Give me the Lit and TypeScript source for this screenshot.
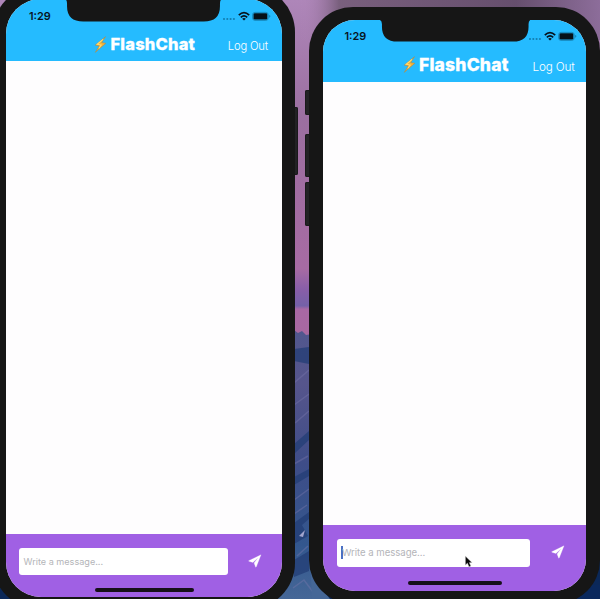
import { LitElement, html, css } from "lit";
import { customElement, property } from "lit/decorators.js";

@customElement("phone-frame")
class PhoneFrame extends LitElement {
  @property({ type: Boolean }) focused = false;

  static styles = css`
    :host { display: block; position: relative; box-sizing: border-box; background: #161616; font-family: Inter, "Liberation Sans", sans-serif; }
    .screen { height: 100%; overflow: hidden; display: flex; flex-direction: column; background: #fefdfe; position: relative; border-radius: var(--radius); }
    header { flex: none; height: var(--head); background: #25bbff; display: flex; flex-direction: column; }
    .status { position: relative; box-sizing: border-box; flex: none; height: var(--status); display: flex; align-items: flex-end; justify-content: space-between; padding: 0 var(--stat-right) 0 var(--stat-left); font-weight: 600; font-size: 10.9px; line-height: 13px; color: #07131d; }
    .icons { display: block; width: 49px; height: 11px; margin-bottom: 1.5px; }
    .notch { position: absolute; top: 0; left: var(--notch-left); width: var(--notch-w); height: var(--notch-h); fill: #161616; }
    .nav { flex: 1; display: grid; grid-template-columns: 1fr auto; padding: 0 var(--nav-right) 0 var(--nav-left); padding-top: var(--nav-top); color: #fff; white-space: nowrap; align-items: start; }
    .title { display: flex; align-items: center; font-size: var(--title); line-height: 20px; font-weight: 800; letter-spacing: var(--title-track); -webkit-text-stroke: .3px #fff; }
    .bolt { width: 13px; height: 17px; margin-right: 3.5px; }
    .logout { font-size: var(--logout); line-height: 20px; font-weight: 300; padding-top: 2px; letter-spacing: -.15px; }
    .messages { flex: 1; }
    footer { flex: none; box-sizing: border-box; height: var(--foot); background: #a060e4; display: flex; align-items: flex-start; padding: var(--foot-top) 0 0 var(--foot-left); position: relative; }
    .field { box-sizing: border-box; width: var(--field-w); height: var(--field-h); border-radius: 3px; background: #fff; display: flex; align-items: center; padding-left: 5px; font-size: var(--message); color: #b4b5b9; white-space: nowrap; letter-spacing: var(--message-track); }
    .caret { width: 2px; height: 13px; background: #4b70c4; margin-left: -1px; margin-right: -.5px; }
    .send { width: 14px; height: 14px; margin-left: var(--send-gap); margin-top: 6.5px; fill: #fff; }
    .home { position: absolute; left: var(--home-left); width: var(--home-w); bottom: var(--home-bottom); height: 3.5px; border-radius: 2px; background: #161019; }
  `;

  render() {
    return html`
      <div class="screen">
        <header>
          <div class="status">
            <svg class="notch" viewBox="0 0 154 25" preserveAspectRatio="none"><path d="M0 0Q2 1 2 5V8Q2 25 18 25H136Q152 25 152 8V5Q152 1 154 0Z"/></svg>
            <span>1:29</span>
            <svg class="icons" viewBox="0 0 49 11">
              <g fill="#1482b6"><rect x="1" y="7" width="2" height="2" rx=".7"/><rect x="4.3" y="7" width="2" height="2" rx=".7"/><rect x="7.6" y="7" width="2" height="2" rx=".7"/><rect x="10.9" y="7" width="2" height="2" rx=".7"/></g>
              <g fill="none" stroke="#07131d" stroke-width="1.7"><path d="M16.8 4.2Q22 -.8 27.2 4.2"/><path d="M18.8 6.4Q22 3.5 25.2 6.4"/></g>
              <path d="M20.2 7.7Q22 6.4 23.8 7.7L22 9.6Z" fill="#07131d"/>
              <rect x="30.6" y="1.4" width="15.6" height="8" rx="2.4" fill="none" stroke="#147eae" stroke-width=".8"/>
              <rect x="31.5" y="2.2" width="13.8" height="6.4" rx="1.3" fill="#051019"/>
              <path d="M47.2 4V6.7Q48.4 6 48.4 5.3T47.2 4Z" fill="#147eae"/>
            </svg>
          </div>
          <div class="nav">
            <div class="title">
              <svg class="bolt" viewBox="0 0 12 15"><path d="M10.6 .3L1.2 8.1L5 8.8L1.2 14.7L10.9 6.4L7.1 5.7Z" fill="#f7b336" stroke="#a98c52" stroke-width=".6"/><path d="M8.4 2.8L2.9 7.3L6.6 8L4.5 11" fill="none" stroke="#ffdc73" stroke-width="1"/></svg>
              <span>FlashChat</span>
            </div>
            <span class="logout">Log Out</span>
          </div>
        </header>
        <div class="messages"></div>
        <footer>
          <div class="field">${this.focused ? html`<span class="caret"></span>` : ""}<span>Write a message...</span></div>
          <svg class="send" viewBox="0 0 14 14"><path d="M13 .8L.8 6.7Q.4 7.1 1 7.3L4.9 8.4L10.3 3.5L6.1 9.1L7.6 13Q8 13.5 8.3 12.8Z" stroke="#fff" stroke-width=".3"/></svg>
          <div class="home"></div>
        </footer>
      </div>`;
  }
}

@customElement("app-root")
class AppRoot extends LitElement {
  static styles = css`
    :host { display: block; width: 600px; height: 599px; position: relative; overflow: hidden; background: #0b2858; }
    .wallpaper { position: absolute; inset: 0; width: 600px; height: 599px; }
    .key { position: absolute; background: #222224; border-radius: 2px; box-shadow: inset 0 0 0 1px #19191a; }
    .power { left: 292px; top: 107px; width: 6px; height: 68px; }
    .mute { left: 305px; top: 90px; width: 7px; height: 25px; }
    .up { left: 305px; top: 134px; width: 7px; height: 43px; }
    .down { left: 305px; top: 182px; width: 7px; height: 44px; }
    phone-frame { position: absolute; }
    .first {
      left: -7px; top: -14px; width: 301.5px; height: 623px; border-radius: 46px; padding: 13px 12.5px 12.5px 12.5px;
      --radius: 35px; --head: 62px; --status: 24px; --stat-left: 23.5px; --stat-right: 11px;
      --notch-left: 59.5px; --notch-w: 157px; --notch-h: 22.5px;
      --nav-left: 88.5px; --nav-right: 14px; --nav-top: 11px; --title: 16.5px; --title-track: .2px; --logout: 11.2px;
      --foot: 62.5px; --foot-top: 13.5px; --foot-left: 13px; --field-w: 209.5px; --field-h: 27px; --message: 9.1px; --message-track: 0; --send-gap: 20px; --home-left: 89px; --home-w: 99px; --home-bottom: 5px;
    }
    .second {
      left: 309px; top: 7px; width: 290.5px; height: 597px; border-radius: 44px; padding: 13px 13.5px 13.5px 13.5px;
      --radius: 32px; --head: 62px; --status: 23px; --stat-left: 22px; --stat-right: 9.5px;
      --notch-left: 57px; --notch-w: 150.5px; --notch-h: 21.5px;
      --nav-left: 80px; --nav-right: 11.5px; --nav-top: 11.5px; --title: 17.5px; --title-track: .2px; --logout: 11.7px;
      --foot: 66px; --foot-top: 14px; --foot-left: 14px; --field-w: 193.5px; --field-h: 28px; --message: 9.6px; --message-track: -.04px; --send-gap: 20.5px; --home-left: 85px; --home-w: 94px; --home-bottom: 6px;
    }
    .cursor { position: absolute; left: 464px; top: 555px; width: 9px; height: 13px; }
  `;

  render() {
    return html`
      <svg class="wallpaper" viewBox="0 0 600 599">
        <defs>
          <linearGradient id="sky" x2="0" y2="1"><stop offset="0" stop-color="#ae86b9"/><stop offset=".35" stop-color="#9b6fa0"/><stop offset=".8" stop-color="#a76ba3"/><stop offset=".86" stop-color="#895ea8"/><stop offset=".91" stop-color="#7461a8"/><stop offset=".92" stop-color="#a868a4"/><stop offset="1" stop-color="#a968a1"/></linearGradient>
          <linearGradient id="top"><stop offset="0" stop-color="#b58abe" stop-opacity="0"/><stop offset=".13" stop-color="#705973"/><stop offset=".72" stop-color="#594560"/><stop offset="1" stop-color="#876995"/></linearGradient>
          <linearGradient id="rocks" x2="0" y2="1"><stop offset="0" stop-color="#51578e"/><stop offset=".2" stop-color="#56558c"/><stop offset=".5" stop-color="#3e4d88"/><stop offset=".8" stop-color="#33578e"/><stop offset="1" stop-color="#456797"/></linearGradient>
        </defs>
        <rect width="600" height="336" fill="url(#sky)"/>
        <rect x="300" width="300" height="40" fill="url(#top)" opacity=".85"/>
        <path d="M288 332L294 330L298 333L302 331L306 335L312 334V599H270Z" fill="url(#rocks)"/>
        <path d="M294 349L309 347V364L294 361ZM294 444L309 431V440L294 454ZM294 477L309 469V476L294 485ZM294 523L309 512V519L302 525L308 536L294 544ZM294 560L309 551V571L294 577Z" fill="#233e76" opacity=".75"/>
        <path d="M294 383L309 370M294 405L309 394M295 423L309 411M294 464L308 456M294 500L309 489M294 514L307 505M297 556L308 546M293 588L304 580L313 592" fill="none" stroke="#7b78ac" stroke-width="1.5" opacity=".4"/>
        <path d="M299 536L305 530L303 537Z" fill="#a3a5ce"/>
        <path d="M310 560Q316 583 330 599H312Z" fill="#456797"/>
        <path d="M330 585H600V599H330Z" fill="#0a285c"/>
      </svg>
      <div class="key power"></div><div class="key mute"></div><div class="key up"></div><div class="key down"></div>
      <phone-frame class="first"></phone-frame>
      <phone-frame class="second" focused></phone-frame>
      <svg class="cursor" viewBox="0 0 9 13"><path d="M1.3 .9V10.2L3.4 8.2L5 12L7 11.1L5.4 7.7H8.2Z" fill="#080808" stroke="#eee" stroke-width=".5"/></svg>`;
  }
}
